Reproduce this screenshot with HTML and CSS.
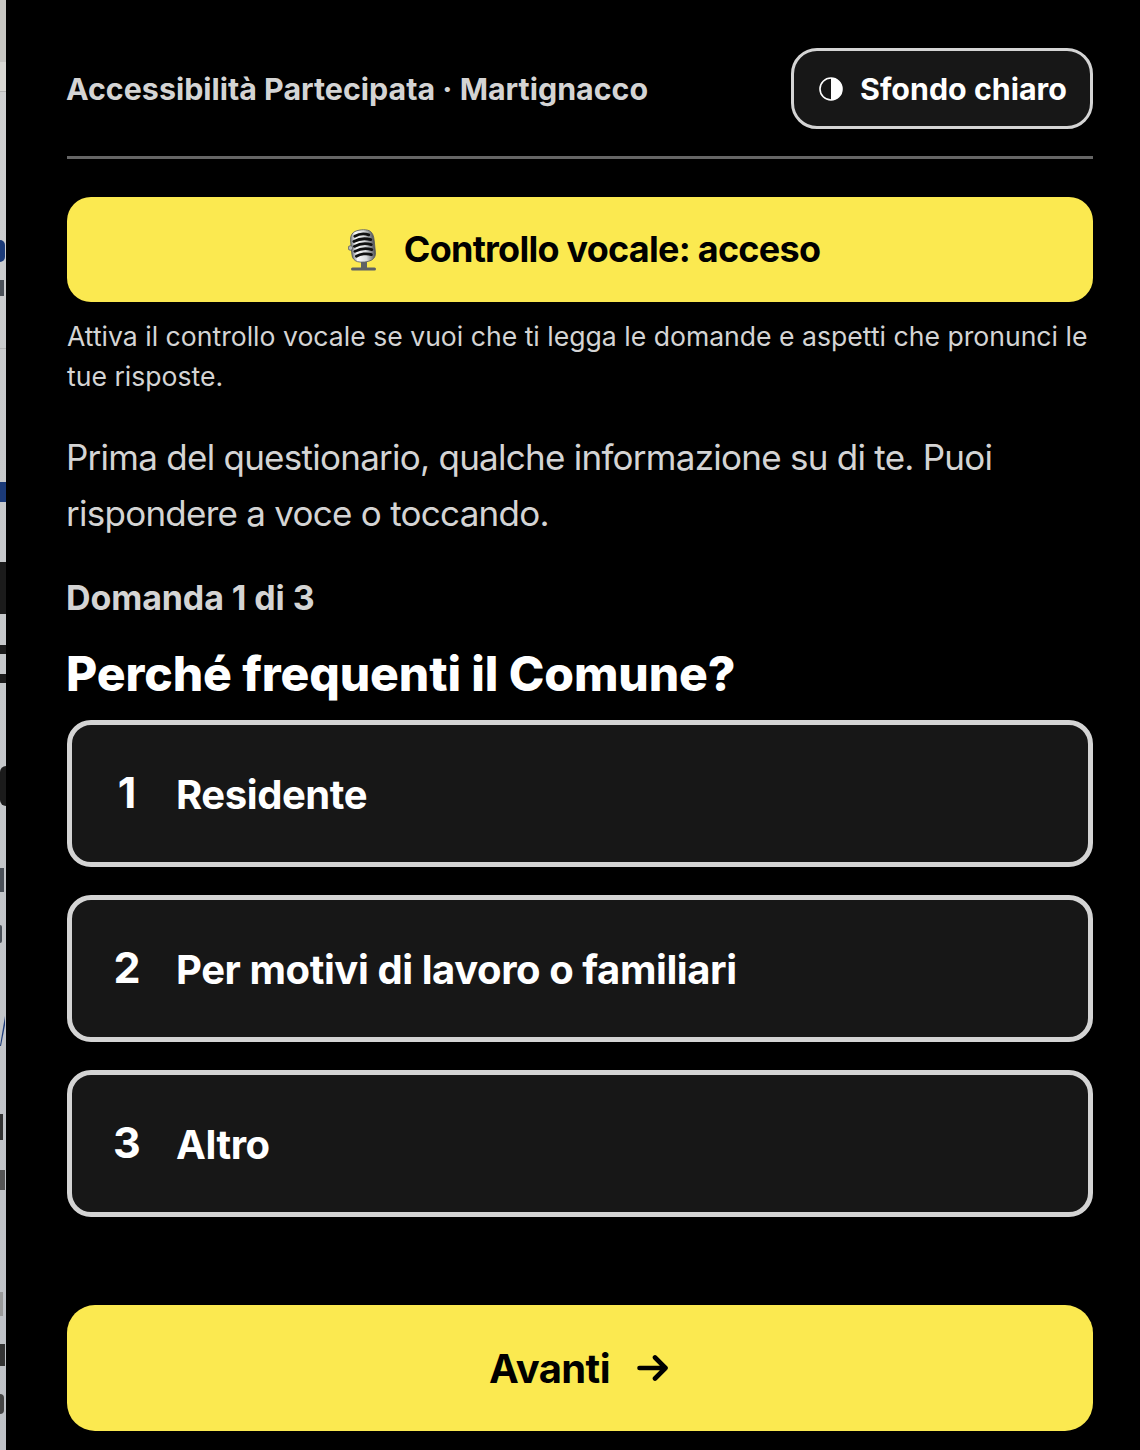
FILE: index.html
```html
<!DOCTYPE html>
<html lang="it">
<head>
<meta charset="utf-8">
<title>Accessibilità Partecipata</title>
<link rel="stylesheet" href="styles.css">
</head>
<body>
<div class="page">
  <div class="strip" aria-hidden="true">
    <span class="sl band-top"></span><span class="sl band-mid"></span>
    <span class="sl rule r1"></span><span class="sl rule r2"></span>
    <span class="sl blue b1"></span><span class="sl grey-t g0"></span>
    <span class="sl blue b2"></span>
    <span class="sl dark d1"></span><span class="sl dark d2"></span><span class="sl dark d3"></span><span class="sl dark d4"></span>
    <span class="sl grey-t g1"></span><span class="sl grey-t g2"></span>
    <span class="sl blue b3"></span>
    <span class="sl grey-t g3"></span><span class="sl grey-t g4"></span><span class="sl grey-t g5"></span><span class="sl grey-t g6"></span><span class="sl grey-t g7"></span>
  </div>
  <main class="panel">
    <header class="top">
      <div class="brand">Accessibilità Partecipata · Martignacco</div>
      <button class="theme" type="button">
        <svg class="theme-ico" viewBox="0 0 24 24"><circle cx="12" cy="12" r="11" fill="none" stroke="#fff" stroke-width="1.600"/><path d="M12 1a11 11 0 0 1 0 22z" fill="#fff"/></svg>
        <span>Sfondo chiaro</span>
      </button>
    </header>
    <button class="cta voice" type="button">
      <svg class="mic" viewBox="0 0 30 42">
        <defs>
          <linearGradient id="m" x1="0" x2="1" y1="0" y2="0">
            <stop offset="0" stop-color="#70747a"/><stop offset=".22" stop-color="#fafafa"/><stop offset=".6" stop-color="#d8dadc"/><stop offset="1" stop-color="#4e5156"/>
          </linearGradient>
        </defs>
        <g transform="rotate(-6 15 18)">
          <path d="M7 2.500c4-2.300 12-2.300 16 0 3 2 3.800 5.500 3.800 10v12c0 3.500-1.500 6-4.800 7.500-4 1.500-10 1.500-14 0C4.700 30.500 3.200 28 3.200 24.500v-12c0-4.500.8-8 3.800-10z" fill="url(#m)" stroke="#55585c" stroke-width=".8"/>
          <path d="M8 6.500c4-1.800 10-1.800 14 0M6.500 11.500c5-2 12-2 17 0M6.500 16.500c5-2 12-2 17 0M6.500 21.500c5-2 12-2 17 0M7.500 26.500c4-2 11-2 15 0" fill="none" stroke="#111" stroke-width="2.800" stroke-linecap="round"/>
        </g>
        <circle cx="2.500" cy="19" r="2.300" fill="#b3b5b8" stroke="#55585c" stroke-width=".8"/>
        <rect x="13" y="33" width="6" height="6" fill="#5f6266"/>
        <rect x="3" y="38.500" width="25" height="3" rx="1.500" fill="#5d6064"/>
      </svg>
      <span class="voice-label">Controllo vocale: acceso</span>
    </button>
    <p class="hint">Attiva il controllo vocale se vuoi che ti legga le domande e aspetti che pronunci le tue risposte.</p>
    <p class="intro">Prima del questionario, qualche informazione su di te. Puoi rispondere a voce o toccando.</p>
    <p class="step">Domanda 1 di 3</p>
    <h1 class="question">Perché frequenti il Comune?</h1>
    <div class="options">
      <button class="option" type="button"><span class="num">1</span><span class="label">Residente</span></button>
      <button class="option" type="button"><span class="num">2</span><span class="label">Per motivi di lavoro o familiari</span></button>
      <button class="option" type="button"><span class="num">3</span><span class="label">Altro</span></button>
    </div>
    <button class="cta next" type="button">
      <span>Avanti</span>
      <svg class="arrow" viewBox="0 0 31 28"><path d="M2.500 14h26M18 3.500l10.500 10.500L18 24.500" fill="none" stroke="#000" stroke-width="4.600" stroke-linecap="round" stroke-linejoin="round"/></svg>
    </button>
  </main>
</div>
</body>
</html>
```
FILE: styles.css
```css
* { box-sizing: border-box; }
html, body { margin: 0; padding: 0; background: #000; }
body { font-family: Inter, "Liberation Sans", sans-serif; width: 1140px; height: 1450px; overflow: hidden; }
.page { display: flex; width: 1140px; height: 1450px; }

.strip { position: relative; flex: 0 0 6px; background: linear-gradient(#d2d2d2, #c8cacc 30%, #bfc2c7); overflow: hidden; }
.sl { position: absolute; left: 0; width: 6px; display: block; }
.band-top { top: 0; height: 62px; background: #c8c7c3; }
.band-mid { top: 62px; height: 29px; background: #d9d8d4; }
.rule { height: 1px; background: #b5b5b5; }
.r1 { top: 91px; } .r2 { top: 348px; }
.blue { background: #1b3a78; }
.b1 { top: 240px; height: 22px; width: 5px; border-radius: 0 6px 6px 0; }
.g0 { top: 280px; height: 16px; width: 3px; background: #6a6e74; }
.b2 { top: 482px; height: 20px; }
.dark { background: #1b1b1b; }
.d1 { top: 562px; height: 52px; } .d2 { top: 645px; height: 9px; }
.d3 { top: 674px; height: 9px; } .d4 { top: 766px; height: 40px; border-radius: 20px 0 0 20px; }
.grey-t { background: #4a5058; width: 4px; }
.g1 { top: 868px; height: 24px; } .g2 { top: 925px; height: 18px; border-radius: 0 8px 8px 0; width: 2px; }
.b3 { top: 1016px; height: 30px; width: 5px; clip-path: polygon(100% 0, 100% 30%, 20% 100%, 0 100%); }
.g3 { top: 1114px; height: 26px; width: 3px; background: #333; }
.g4 { top: 1170px; height: 20px; width: 5px; background: #555; }
.g5 { top: 1292px; height: 24px; width: 3px; background: #999; }
.g6 { top: 1344px; height: 22px; width: 5px; background: #333; }
.g7 { top: 1394px; height: 20px; width: 4px; background: #444; border-radius: 0 8px 8px 0; }

.panel { flex: 1; background: #000; border-radius: 0 0 0 14px; padding: 48px 47px 0 61px; display: flex; flex-direction: column; color: #d4d4d4; }

.top { display: flex; align-items: center; justify-content: space-between; height: 111px; padding-bottom: 27px; border-bottom: 3px solid #666; }
.brand { font-size: 30.4px; font-weight: 700; color: #d4d4d4; white-space: nowrap; margin-left: -1px; }
.theme { display: flex; align-items: center; gap: 17px; height: 81px; width: 302px; padding: 0 0 0 25px; background: #171717; border: 3px solid #d4d4d4; border-radius: 26px; color: #fff; font: 700 30.4px Inter, "Liberation Sans", sans-serif; white-space: nowrap; }
.theme-ico { width: 24px; height: 24px; flex: none; }

.cta { display: flex; align-items: center; justify-content: center; width: 100%; background: #fbe950; border: 0; color: #000; font-family: Inter, "Liberation Sans", sans-serif; font-weight: 700; }
.voice { margin-top: 38px; height: 105px; border-radius: 24px; font-size: 36px; letter-spacing: -0.75px; gap: 26px; padding-left: 14px; }
.voice-label { margin-top: -2px; }
.mic { width: 30px; height: 42px; flex: none; }

.hint { margin: 14px 0 0; font-size: 26.6px; line-height: 40px; color: #d4d4d4; }
.intro { margin: 33px 0 0 -1px; font-size: 35px; line-height: 56px; letter-spacing: -0.74px; color: #d4d4d4; }
.step { margin: 33px 0 0 -1px; font-size: 34px; line-height: 48px; font-weight: 700; letter-spacing: -0.1px; color: #d4d4d4; }
.question { margin: 22px 0 0 -1px; font-size: 48px; line-height: 60px; font-weight: 800; color: #fff; letter-spacing: -0.1px; }

.options { display: flex; flex-direction: column; gap: 28px; margin-top: 16px; }
.option { display: flex; align-items: center; height: 147px; padding: 0 0 0 24px; background: #171717; border: 5px solid #d4d4d4; border-radius: 24px; color: #fff; font-family: Inter, "Liberation Sans", sans-serif; font-weight: 700; text-align: left; }
.num { flex: 0 0 62px; font-size: 43px; text-align: center; margin-right: 18px; margin-top: -3px; }
.label { font-size: 40px; letter-spacing: -0.42px; margin-top: 1px; }

.next { margin-top: 88px; height: 126px; border-radius: 28px; font-size: 40px; letter-spacing: -0.6px; gap: 27px; padding-right: 9px; }
.arrow { width: 31px; height: 28px; flex: none; }
```
